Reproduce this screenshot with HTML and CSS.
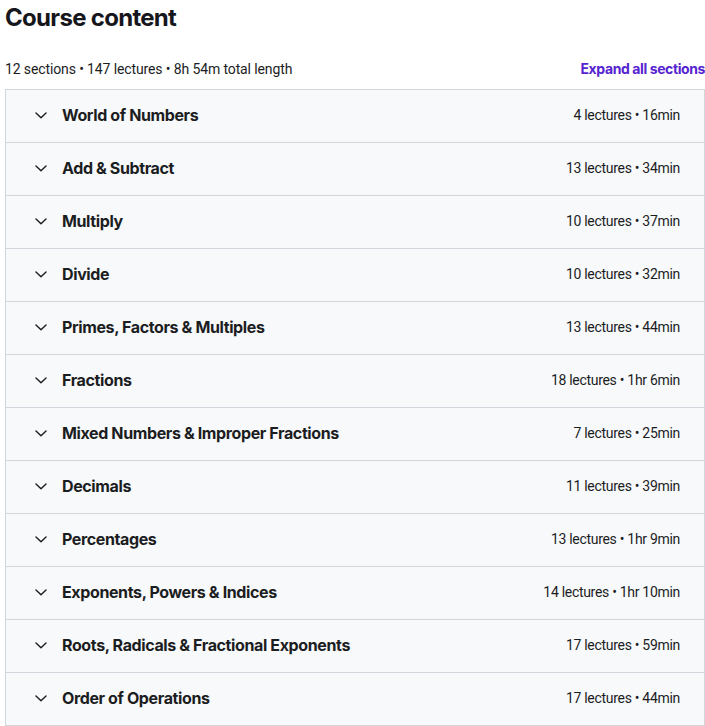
FILE: index.html
```html
<!DOCTYPE html>
<html>
<head>
<meta charset="utf-8">
<link rel="stylesheet" href="styles.css">
</head>
<body>
<div class="page">
  <h2 class="title">Course content</h2>
  <div class="summary">
    <span class="stats">12 sections • 147 lectures • 8h 54m total length</span>
    <button class="expand">Expand all sections</button>
  </div>
  <div class="sections">
    <div class="section"><span class="chev"><svg viewBox="0 0 24 24"><path d="M5.3 9.4l6.7 6.4 6.7-6.4"/></svg></span><span class="name">World of Numbers</span><span class="meta">4 lectures • 16min</span></div>
    <div class="section"><span class="chev"><svg viewBox="0 0 24 24"><path d="M5.3 9.4l6.7 6.4 6.7-6.4"/></svg></span><span class="name">Add &amp; Subtract</span><span class="meta">13 lectures • 34min</span></div>
    <div class="section"><span class="chev"><svg viewBox="0 0 24 24"><path d="M5.3 9.4l6.7 6.4 6.7-6.4"/></svg></span><span class="name">Multiply</span><span class="meta">10 lectures • 37min</span></div>
    <div class="section"><span class="chev"><svg viewBox="0 0 24 24"><path d="M5.3 9.4l6.7 6.4 6.7-6.4"/></svg></span><span class="name">Divide</span><span class="meta">10 lectures • 32min</span></div>
    <div class="section"><span class="chev"><svg viewBox="0 0 24 24"><path d="M5.3 9.4l6.7 6.4 6.7-6.4"/></svg></span><span class="name">Primes, Factors &amp; Multiples</span><span class="meta">13 lectures • 44min</span></div>
    <div class="section"><span class="chev"><svg viewBox="0 0 24 24"><path d="M5.3 9.4l6.7 6.4 6.7-6.4"/></svg></span><span class="name">Fractions</span><span class="meta">18 lectures • 1hr 6min</span></div>
    <div class="section"><span class="chev"><svg viewBox="0 0 24 24"><path d="M5.3 9.4l6.7 6.4 6.7-6.4"/></svg></span><span class="name">Mixed Numbers &amp; Improper Fractions</span><span class="meta">7 lectures • 25min</span></div>
    <div class="section"><span class="chev"><svg viewBox="0 0 24 24"><path d="M5.3 9.4l6.7 6.4 6.7-6.4"/></svg></span><span class="name">Decimals</span><span class="meta">11 lectures • 39min</span></div>
    <div class="section"><span class="chev"><svg viewBox="0 0 24 24"><path d="M5.3 9.4l6.7 6.4 6.7-6.4"/></svg></span><span class="name">Percentages</span><span class="meta">13 lectures • 1hr 9min</span></div>
    <div class="section"><span class="chev"><svg viewBox="0 0 24 24"><path d="M5.3 9.4l6.7 6.4 6.7-6.4"/></svg></span><span class="name">Exponents, Powers &amp; Indices</span><span class="meta">14 lectures • 1hr 10min</span></div>
    <div class="section"><span class="chev"><svg viewBox="0 0 24 24"><path d="M5.3 9.4l6.7 6.4 6.7-6.4"/></svg></span><span class="name">Roots, Radicals &amp; Fractional Exponents</span><span class="meta">17 lectures • 59min</span></div>
    <div class="section"><span class="chev"><svg viewBox="0 0 24 24"><path d="M5.3 9.4l6.7 6.4 6.7-6.4"/></svg></span><span class="name">Order of Operations</span><span class="meta">17 lectures • 44min</span></div>
  </div>
</div>
</body>
</html>
```
FILE: styles.css
```css
* { box-sizing: border-box; }
html, body { margin: 0; padding: 0; background: #fff; }
body {
  font-family: Roboto, "Liberation Sans", sans-serif;
  color: #1c1d1f;
}
.page {
  width: 700px;
  margin-left: 5px;
}
.title {
  margin: 0;
  padding-top: 3px;
  font-family: Inter, Roboto, sans-serif;
  font-size: 24px;
  line-height: 30px;
  font-weight: 700;
  color: #16161d;
  letter-spacing: -0.7px;
}
.summary {
  display: flex;
  justify-content: space-between;
  align-items: center;
  margin-top: 21px;
  height: 30px;
  margin-bottom: 5px;
  font-size: 14px;
  line-height: 20px;
}
.stats { color: #1c1d1f; letter-spacing: -0.12px; }
.expand {
  border: 0;
  background: none;
  padding: 0;
  font-family: Inter, Roboto, sans-serif;
  font-size: 14px;
  line-height: 20px;
  font-weight: 700;
  color: #5624d0;
  letter-spacing: -0.4px;
  cursor: pointer;
}
.sections {
  border: 1px solid #d1d7dc;
  border-bottom: 0;
}
.section {
  display: flex;
  align-items: center;
  height: 53px;
  padding: 0 24px 2px 26px;
  background: #f7f9fa;
  border-bottom: 1px solid #d1d7dc;
}
.chev {
  width: 18px;
  height: 18px;
  margin-right: 12px;
  display: flex;
}
.chev svg {
  width: 18px;
  height: 18px;
  fill: none;
  stroke: #1c1d1f;
  stroke-width: 1.9;
  stroke-linecap: round;
  stroke-linejoin: round;
}
.name {
  flex: 1;
  font-family: Inter, Roboto, sans-serif;
  font-size: 16px;
  font-weight: 700;
  color: #1c1d1f;
  letter-spacing: -0.38px;
}
.meta {
  font-size: 14px;
  color: #1c1d1f;
  letter-spacing: -0.3px;
}
```
